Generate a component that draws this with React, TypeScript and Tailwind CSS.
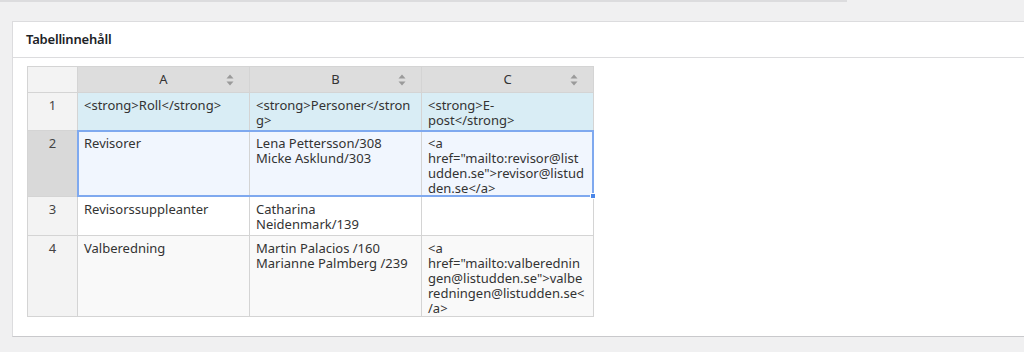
import React from "react";

const font = { fontFamily: '"Noto Sans", "Open Sans", sans-serif' };

function SortIcon() {
  return (
    <svg width="8" height="12" viewBox="0 0 8 12" className="absolute right-[15px] top-[7px]">
      <path d="M4 0.5 L7.5 4.5 H0.5 Z" fill="#9a9a9a" />
      <path d="M4 11.5 L7.5 7.5 H0.5 Z" fill="#9a9a9a" />
    </svg>
  );
}

type Row = {
  n: number;
  h: string;
  bg: string;
  headBg: string;
  cells: string[][];
};

const rows: Row[] = [
  {
    n: 1,
    h: "h-[38px]",
    bg: "bg-[#d9edf5]",
    headBg: "bg-[#f3f3f3]",
    cells: [
      ["<strong>Roll</strong>"],
      ["<strong>Personer</stron", "g>"],
      ["<strong>E-", "post</strong>"],
    ],
  },
  {
    n: 2,
    h: "h-[66px]",
    bg: "bg-[#f1f6fe]",
    headBg: "bg-[#d9d9d9]",
    cells: [
      ["Revisorer"],
      ["Lena Pettersson/308", "Micke Asklund/303"],
      ["<a", 'href="mailto:revisor@list', 'udden.se">revisor@listud', "den.se</a>"],
    ],
  },
  {
    n: 3,
    h: "h-[39px]",
    bg: "bg-white",
    headBg: "bg-[#f3f3f3]",
    cells: [["Revisorssuppleanter"], ["Catharina", "Neidenmark/139"], []],
  },
  {
    n: 4,
    h: "h-[81px]",
    bg: "bg-[#f9f9f9]",
    headBg: "bg-[#f3f3f3]",
    cells: [
      ["Valberedning"],
      ["Martin Palacios /160", "Marianne Palmberg /239"],
      ["<a", 'href="mailto:valberednin', 'gen@listudden.se">valbe', "redningen@listudden.se<", "/a>"],
    ],
  },
];

export default function App() {
  return (
    <div className="w-[1024px] h-[352px] overflow-hidden bg-[#f0f0f1] text-[#3c434a]" style={font}>
      <div className="h-[2px] w-[847px] bg-[#dcdcde]" />

      <div className="ml-[12px] mt-[19px] w-[1030px] h-[316px] bg-white border border-[#dcdcde] border-b-[#c9c9cc]">
        {/* Header */}
        <div className="h-[36px] flex items-center px-[13px] border-b border-[#dcdcde]">
          <span className="text-[13px] font-semibold text-[#1d2327] tracking-[-0.2px]">Tabellinnehåll</span>
        </div>

        {/* Table */}
        <div className="pl-[14px] pt-[8px]">
          <div className="relative w-fit">
            <table className="border-collapse text-[13px] leading-[15px]">
              <thead>
                <tr className="h-[26px]">
                  <th className="w-[50px] bg-[#f3f3f3] border border-[#d4d4d4]" />
                  {["A", "B", "C"].map((c) => (
                    <th
                      key={c}
                      className="relative w-[172px] bg-[#dddddd] border border-[#d4d4d4] font-normal text-center text-[#333]"
                    >
                      {c}
                      <SortIcon />
                    </th>
                  ))}
                </tr>
              </thead>
              <tbody>
                {rows.map((r) => (
                  <tr key={r.n} className={r.h}>
                    <td
                      className={`${r.headBg} border border-[#d4d4d4] text-center align-top pt-[5px] text-[#444]`}
                    >
                      {r.n}
                    </td>
                    {r.cells.map((lines, i) => (
                      <td
                        key={i}
                        className={`${r.bg} border border-[#d4d4d4] align-top px-[6px] pt-[5px] whitespace-nowrap text-[#333]`}
                      >
                        {lines.map((l, j) => (
                          <div key={j}>{l}</div>
                        ))}
                      </td>
                    ))}
                  </tr>
                ))}
              </tbody>
            </table>

            {/* selection A2:C2 */}
            <div className="pointer-events-none absolute left-[50px] top-[64px] w-[517px] h-[67px] border-2 border-[#7fa9ef]">
              <span className="absolute -right-[4px] -bottom-[4px] w-[6px] h-[6px] bg-[#4a86e8] border border-white" />
            </div>
          </div>
        </div>
      </div>
    </div>
  );
}
